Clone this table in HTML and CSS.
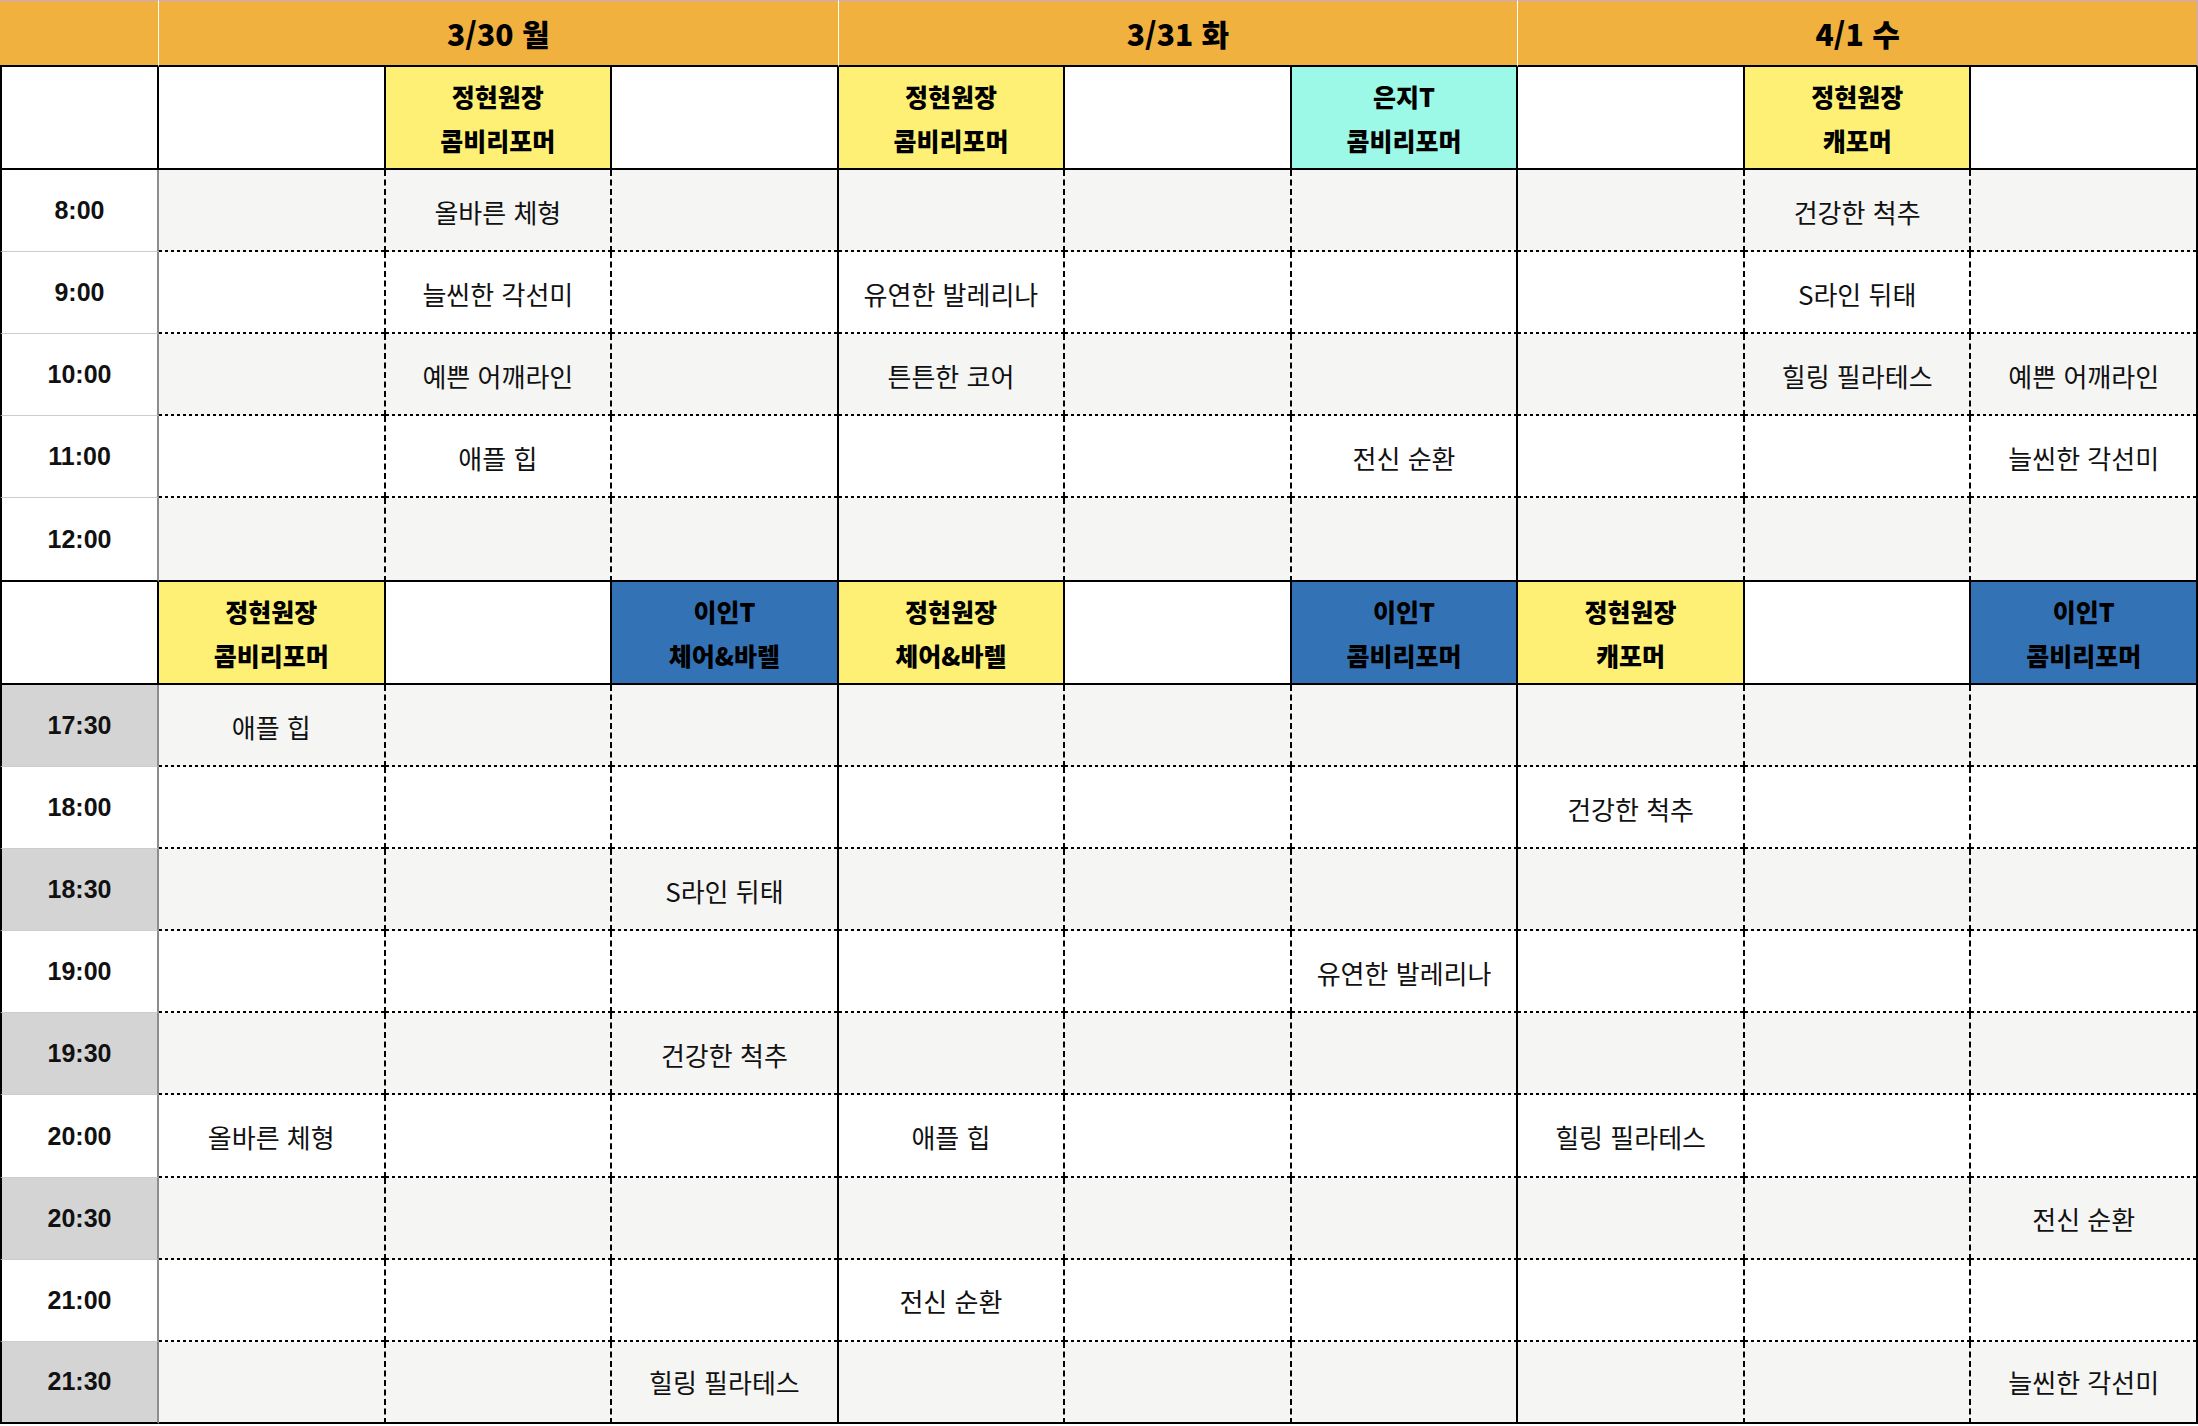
FILE: index.html
```html
<!DOCTYPE html>
<html lang="ko">
<head>
<meta charset="utf-8">
<title>시간표</title>
<link rel="stylesheet" href="styles.css">
</head>
<body>
<div class="sched">
  <div class="row head">
    <div class="hd tcol"></div>
    <div class="hd day">3/30 월</div>
    <div class="hd day">3/31 화</div>
    <div class="hd day lastday">4/1 수</div>
  </div>

  <div class="row staff">
    <div class="tm"></div>
    <div class="d"></div>
    <div class="d y">정현원장<br>콤비리포머</div>
    <div class="d"></div>
    <div class="d y">정현원장<br>콤비리포머</div>
    <div class="d"></div>
    <div class="d c">은지T<br>콤비리포머</div>
    <div class="d"></div>
    <div class="d y">정현원장<br>캐포머</div>
    <div class="d"></div>
  </div>

  <div class="row grey">
    <div class="tm">8:00</div>
    <div class="d"></div><div class="d">올바른 체형</div><div class="d"></div>
    <div class="d"></div><div class="d"></div><div class="d"></div>
    <div class="d"></div><div class="d">건강한 척추</div><div class="d"></div>
  </div>
  <div class="row">
    <div class="tm">9:00</div>
    <div class="d"></div><div class="d">늘씬한 각선미</div><div class="d"></div>
    <div class="d">유연한 발레리나</div><div class="d"></div><div class="d"></div>
    <div class="d"></div><div class="d">S라인 뒤태</div><div class="d"></div>
  </div>
  <div class="row grey">
    <div class="tm">10:00</div>
    <div class="d"></div><div class="d">예쁜 어깨라인</div><div class="d"></div>
    <div class="d">튼튼한 코어</div><div class="d"></div><div class="d"></div>
    <div class="d"></div><div class="d">힐링 필라테스</div><div class="d">예쁜 어깨라인</div>
  </div>
  <div class="row">
    <div class="tm">11:00</div>
    <div class="d"></div><div class="d">애플 힙</div><div class="d"></div>
    <div class="d"></div><div class="d"></div><div class="d">전신 순환</div>
    <div class="d"></div><div class="d"></div><div class="d">늘씬한 각선미</div>
  </div>
  <div class="row grey closing">
    <div class="tm">12:00</div>
    <div class="d"></div><div class="d"></div><div class="d"></div>
    <div class="d"></div><div class="d"></div><div class="d"></div>
    <div class="d"></div><div class="d"></div><div class="d"></div>
  </div>

  <div class="row staff">
    <div class="tm"></div>
    <div class="d y">정현원장<br>콤비리포머</div>
    <div class="d"></div>
    <div class="d b">이인T<br>체어&amp;바렐</div>
    <div class="d y">정현원장<br>체어&amp;바렐</div>
    <div class="d"></div>
    <div class="d b">이인T<br>콤비리포머</div>
    <div class="d y">정현원장<br>캐포머</div>
    <div class="d"></div>
    <div class="d b">이인T<br>콤비리포머</div>
  </div>

  <div class="row grey half">
    <div class="tm">17:30</div>
    <div class="d">애플 힙</div><div class="d"></div><div class="d"></div>
    <div class="d"></div><div class="d"></div><div class="d"></div>
    <div class="d"></div><div class="d"></div><div class="d"></div>
  </div>
  <div class="row">
    <div class="tm">18:00</div>
    <div class="d"></div><div class="d"></div><div class="d"></div>
    <div class="d"></div><div class="d"></div><div class="d"></div>
    <div class="d">건강한 척추</div><div class="d"></div><div class="d"></div>
  </div>
  <div class="row grey half">
    <div class="tm">18:30</div>
    <div class="d"></div><div class="d"></div><div class="d">S라인 뒤태</div>
    <div class="d"></div><div class="d"></div><div class="d"></div>
    <div class="d"></div><div class="d"></div><div class="d"></div>
  </div>
  <div class="row">
    <div class="tm">19:00</div>
    <div class="d"></div><div class="d"></div><div class="d"></div>
    <div class="d"></div><div class="d"></div><div class="d">유연한 발레리나</div>
    <div class="d"></div><div class="d"></div><div class="d"></div>
  </div>
  <div class="row grey half">
    <div class="tm">19:30</div>
    <div class="d"></div><div class="d"></div><div class="d">건강한 척추</div>
    <div class="d"></div><div class="d"></div><div class="d"></div>
    <div class="d"></div><div class="d"></div><div class="d"></div>
  </div>
  <div class="row">
    <div class="tm">20:00</div>
    <div class="d">올바른 체형</div><div class="d"></div><div class="d"></div>
    <div class="d">애플 힙</div><div class="d"></div><div class="d"></div>
    <div class="d">힐링 필라테스</div><div class="d"></div><div class="d"></div>
  </div>
  <div class="row grey half">
    <div class="tm">20:30</div>
    <div class="d"></div><div class="d"></div><div class="d"></div>
    <div class="d"></div><div class="d"></div><div class="d"></div>
    <div class="d"></div><div class="d"></div><div class="d">전신 순환</div>
  </div>
  <div class="row">
    <div class="tm">21:00</div>
    <div class="d"></div><div class="d"></div><div class="d"></div>
    <div class="d">전신 순환</div><div class="d"></div><div class="d"></div>
    <div class="d"></div><div class="d"></div><div class="d"></div>
  </div>
  <div class="row grey half closing">
    <div class="tm">21:30</div>
    <div class="d"></div><div class="d"></div><div class="d">힐링 필라테스</div>
    <div class="d"></div><div class="d"></div><div class="d"></div>
    <div class="d"></div><div class="d"></div><div class="d">늘씬한 각선미</div>
  </div>
</div>
</body>
</html>
```

FILE: styles.css
```css
* { box-sizing: border-box; }

html, body {
  margin: 0;
  padding: 0;
  background: #ffffff;
}

.sched {
  width: 2198px;
  display: grid;
  grid-template-columns: 159px repeat(9, 1fr);
  grid-template-rows: 67px 103px 82px 82px 82px 82px 84px 103px repeat(9, 82.1px);
  font-family: "Noto Sans CJK KR", "Noto Sans", sans-serif;
  color: #111;
}

.row { display: contents; }

/* top date header */
.hd {
  background: #f1b13f;
  border-top: 1px solid #c7a8d8;
  border-bottom: 2px solid #000;
  border-right: 1px solid #ffffff;
  display: flex;
  align-items: center;
  justify-content: center;
  font-weight: 900;
  font-size: 30px;
  color: #000;
}
.hd.day { grid-column: span 3; }
.hd.lastday { border-right: 1px solid #c7a8d8; }

/* generic cells */
.tm, .d {
  display: flex;
  align-items: center;
  justify-content: center;
  text-align: center;
}

/* time column */
.tm {
  background: #ffffff;
  border-left: 2px solid #000;
  border-right: 2px solid #8d8d8d;
  border-bottom: 1px solid #cccccc;
  font-family: "Liberation Sans", Arial, sans-serif;
  font-weight: 700;
  font-size: 25px;
  color: #111;
}
.half .tm { background: #d4d4d4; }

/* data cells: dashed vertical border, short-dash horizontal rule */
.d {
  background-color: #ffffff;
  background-image: linear-gradient(to right, #000 50%, transparent 50%);
  background-size: 6px 2px;
  background-repeat: repeat-x;
  background-position: left bottom;
  border-right: 2px dashed #000;
  font-size: 26px;
  font-weight: 400;
}
.grey .d { background-color: #f5f5f4; }
.row > .d:nth-child(4),
.row > .d:nth-child(7),
.row > .d:nth-child(10) { border-right: 2px solid #000; }

.closing .d {
  background-image: none;
  border-bottom: 2px solid #000;
}
.closing .tm { border-bottom: 2px solid #000; }

/* staff header rows */
.staff .tm {
  border-right: 2px solid #000;
  border-bottom: 2px solid #000;
}
.staff .d {
  background-image: none;
  border-right: 2px solid #000;
  border-bottom: 2px solid #000;
  font-weight: 900;
  font-size: 25px;
  line-height: 44px;
  color: #000;
}
.staff .d.y { background-color: #fdf074; }
.staff .d.c { background-color: #9cf8e7; }
.staff .d.b { background-color: #3373b5; }
```
